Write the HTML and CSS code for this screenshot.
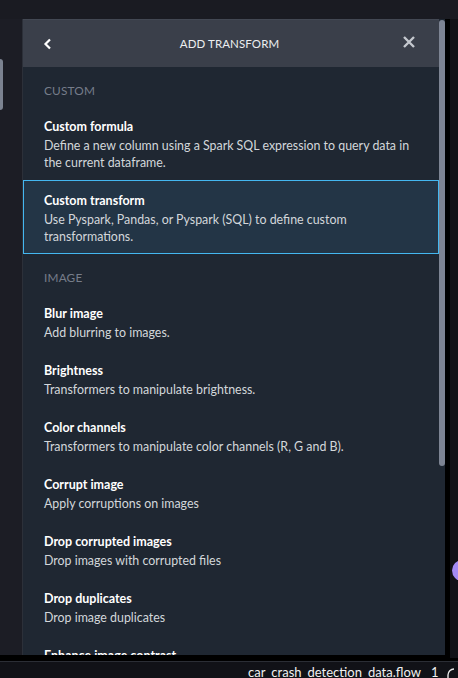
FILE: index.html
```html
<!DOCTYPE html>
<html>
<head>
<meta charset="utf-8">
<link rel="stylesheet" href="styles.css">
</head>
<body>
<div class="app">
  <div class="topstrip"></div>
  <div class="middle">
    <div class="leftcol"><div class="lefttab"></div></div>
    <div class="panel">
      <div class="content">
        <div class="header">
          <svg class="back" width="10" height="12" viewBox="0 0 10 12"><path d="M7 1.5 L2.5 6 L7 10.5" fill="none" stroke="#ffffff" stroke-width="2.2"/></svg>
          <div class="title">ADD TRANSFORM</div>
          <svg class="close" width="14" height="14" viewBox="0 0 14 14"><path d="M2 2 L12 12 M12 2 L2 12" stroke="#c4c8ce" stroke-width="2.4"/></svg>
        </div>
        <div class="list">
          <div class="section">CUSTOM</div>
          <div class="item">
            <div class="item-title">Custom formula</div>
            <div class="item-desc">Define a new column using a Spark SQL expression to query data in the current dataframe.</div>
          </div>
          <div class="item selected">
            <div class="item-title">Custom transform</div>
            <div class="item-desc">Use Pyspark, Pandas, or Pyspark (SQL) to define custom transformations.</div>
          </div>
          <div class="section">IMAGE</div>
          <div class="item">
            <div class="item-title">Blur image</div>
            <div class="item-desc">Add blurring to images.</div>
          </div>
          <div class="item">
            <div class="item-title">Brightness</div>
            <div class="item-desc">Transformers to manipulate brightness.</div>
          </div>
          <div class="item">
            <div class="item-title">Color channels</div>
            <div class="item-desc">Transformers to manipulate color channels (R, G and B).</div>
          </div>
          <div class="item">
            <div class="item-title">Corrupt image</div>
            <div class="item-desc">Apply corruptions on images</div>
          </div>
          <div class="item">
            <div class="item-title">Drop corrupted images</div>
            <div class="item-desc">Drop images with corrupted files</div>
          </div>
          <div class="item">
            <div class="item-title">Drop duplicates</div>
            <div class="item-desc">Drop image duplicates</div>
          </div>
          <div class="item">
            <div class="item-title">Enhance image contrast</div>
            <div class="item-desc">Enhance the contrast of images.</div>
          </div>
        </div>
      </div>
      <div class="scrolltrack"><div class="thumb"></div></div>
    </div>
    <div class="gapcol"></div>
    <div class="rightcol"><div class="avatar"></div></div>
  </div>
  <div class="blackgap"></div>
  <div class="bottombar">
    <span class="filename">car_crash_detection_data.flow</span>
    <span class="count">1</span>
    <svg class="arc" width="10" height="16" viewBox="0 0 10 16"><path d="M8 3 A6 6 0 0 0 2 9 L2 16" fill="none" stroke="#e6e6e6" stroke-width="1.4"/></svg>
  </div>
</div>
</body>
</html>
```
FILE: styles.css
```css
* { box-sizing: border-box; }
html, body { margin: 0; padding: 0; }
body {
  width: 458px;
  height: 678px;
  overflow: hidden;
  background: #000;
  font-family: "Lato", "Liberation Sans", sans-serif;
}
.app {
  display: flex;
  flex-direction: column;
  height: 678px;
}
.topstrip {
  height: 19px;
  background: #1a1b22;
  flex: none;
}
.middle {
  height: 636px;
  flex: none;
  display: flex;
  position: relative;
}
.leftcol {
  width: 23px;
  background: #1c1d25;
  border-right: 1px solid #2c3039;
  flex: none;
  padding-top: 40px;
}
.lefttab {
  width: 3px;
  height: 51px;
  background: #7b8290;
  border-radius: 0 3px 3px 0;
}
.panel {
  width: 422px;
  flex: none;
  display: flex;
  background: #1f2732;
  overflow: hidden;
}
.content {
  width: 416px;
  flex: none;
  display: flex;
  flex-direction: column;
  overflow: hidden;
}
.header {
  height: 48px;
  flex: none;
  background: #3a3f4a;
  border-top: 1px solid #434853;
  display: flex;
  align-items: center;
  padding: 0 23px 0 20px;
}
.back { flex: none; }
.title {
  flex: 1;
  text-align: center;
  color: #eceef0;
  font-size: 11.5px;
  letter-spacing: 0.1px;
  padding-left: 4px;
}
.close { flex: none; margin-bottom: 4px; }
.list { flex: 1; overflow: hidden; }
.section {
  padding: 15px 21px 6px;
  line-height: 18px;
  font-size: 11.8px;
  color: #767d8a;
  letter-spacing: 0.2px;
}
.item {
  padding: 12px 21px 9px;
}
.item.selected {
  background: #233546;
  border: 1px solid #44b7f0;
  padding: 11px 20px 8px;
}
.item-title {
  font-weight: 700;
  color: #ffffff;
  font-size: 12.5px;
  line-height: 18px;
}
.item-desc {
  color: #d3d7db;
  font-size: 12.4px;
  line-height: 17px;
  margin-top: 1px;
}
.scrolltrack {
  width: 6px;
  flex: none;
  padding-top: 1px;
}
.thumb {
  width: 6px;
  height: 446px;
  background: #7d8493;
  border-radius: 3px;
}
.gapcol {
  width: 5px;
  flex: none;
  background: #000;
}
.rightcol {
  flex: 1;
  background: #111217;
  height: 639px;
  position: relative;
}
.avatar {
  position: absolute;
  right: -15px;
  top: 541px;
  width: 21px;
  height: 21px;
  border-radius: 50%;
  background: #a48cf5;
}
.blackgap {
  height: 6px;
  flex: none;
  background: #000;
}
.bottombar {
  flex: 1;
  background: #111217;
  border-top: 1px solid #2b2e35;
  display: flex;
  align-items: flex-start;
  padding: 1px 0 0 248px;
  color: #f0f0f0;
  font-size: 13px;
  line-height: 18px;
  overflow: hidden;
}
.count { margin-left: 10px; }
.arc { margin-left: 8px; margin-top: 3px; flex: none; }
```
